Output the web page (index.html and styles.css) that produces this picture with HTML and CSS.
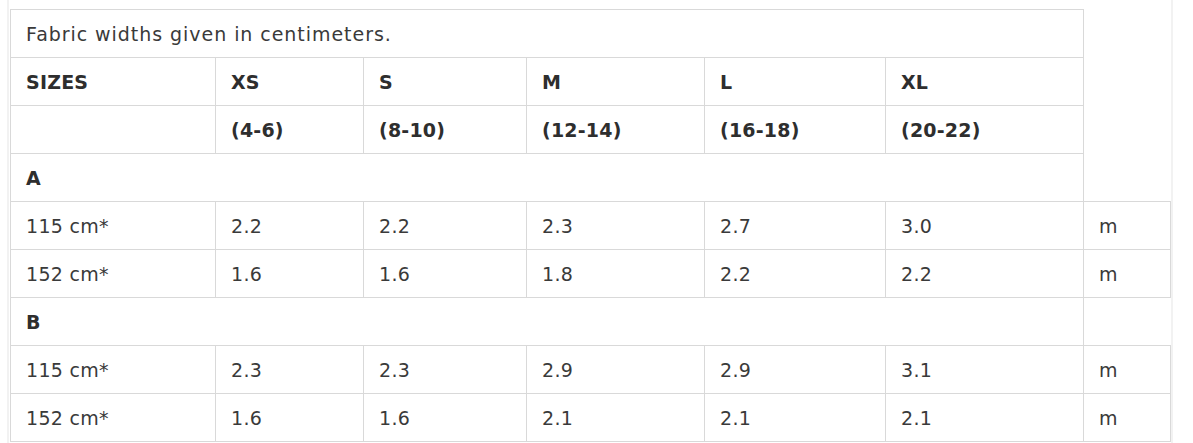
FILE: index.html
```html
<!DOCTYPE html>
<html>
<head>
<meta charset="utf-8">
<link rel="stylesheet" href="styles.css">
</head>
<body>
<div class="frame">
<table class="sizes">
<colgroup>
<col class="c1"><col class="c2"><col class="c3"><col class="c4"><col class="c5"><col class="c6"><col class="c7">
</colgroup>
<tr><td class="caption" colspan="6">Fabric widths given in centimeters.</td></tr>
<tr class="bold"><td>SIZES</td><td>XS</td><td>S</td><td>M</td><td>L</td><td>XL</td></tr>
<tr class="bold"><td></td><td>(4-6)</td><td>(8-10)</td><td>(12-14)</td><td>(16-18)</td><td>(20-22)</td></tr>
<tr class="bold"><td colspan="6">A</td></tr>
<tr><td>115 cm*</td><td>2.2</td><td>2.2</td><td>2.3</td><td>2.7</td><td>3.0</td><td>m</td></tr>
<tr><td>152 cm*</td><td>1.6</td><td>1.6</td><td>1.8</td><td>2.2</td><td>2.2</td><td>m</td></tr>
<tr class="bold"><td colspan="6">B</td></tr>
<tr><td>115 cm*</td><td>2.3</td><td>2.3</td><td>2.9</td><td>2.9</td><td>3.1</td><td>m</td></tr>
<tr><td>152 cm*</td><td>1.6</td><td>1.6</td><td>2.1</td><td>2.1</td><td>2.1</td><td>m</td></tr>
</table>
</div>
</body>
</html>
```
FILE: styles.css
```css
html, body {
  margin: 0;
  padding: 0;
  background: #fff;
}
body {
  font-family: "DejaVu Sans", sans-serif;
  color: #3a3a3a;
}
.frame {
  margin-left: 7px;
  width: 1161px;
  border-left: 2px solid #f2f2f2;
  border-right: 2px solid #f2f2f2;
  padding: 9px 0 0 1px;
  min-height: 434px;
}
.sizes {
  border-collapse: collapse;
  table-layout: fixed;
  width: 1160px;
}
.c1 { width: 205px; }
.c2 { width: 148px; }
.c3 { width: 163px; }
.c4 { width: 178px; }
.c5 { width: 181px; }
.c6 { width: 198px; }
.c7 { width: 87px; }
.sizes td {
  border: 1px solid #d9d9d9;
  height: 47px;
  padding: 2px 0 0 15px;
  font-size: 19px;
  line-height: 45px;
  letter-spacing: 0.3px;
  box-sizing: border-box;
  vertical-align: middle;
  white-space: nowrap;
}
.sizes td.caption {
  letter-spacing: 0.95px;
}
.bold td {
  font-weight: bold;
  letter-spacing: 0.2px;
  color: #2e2e2e;
}
```
